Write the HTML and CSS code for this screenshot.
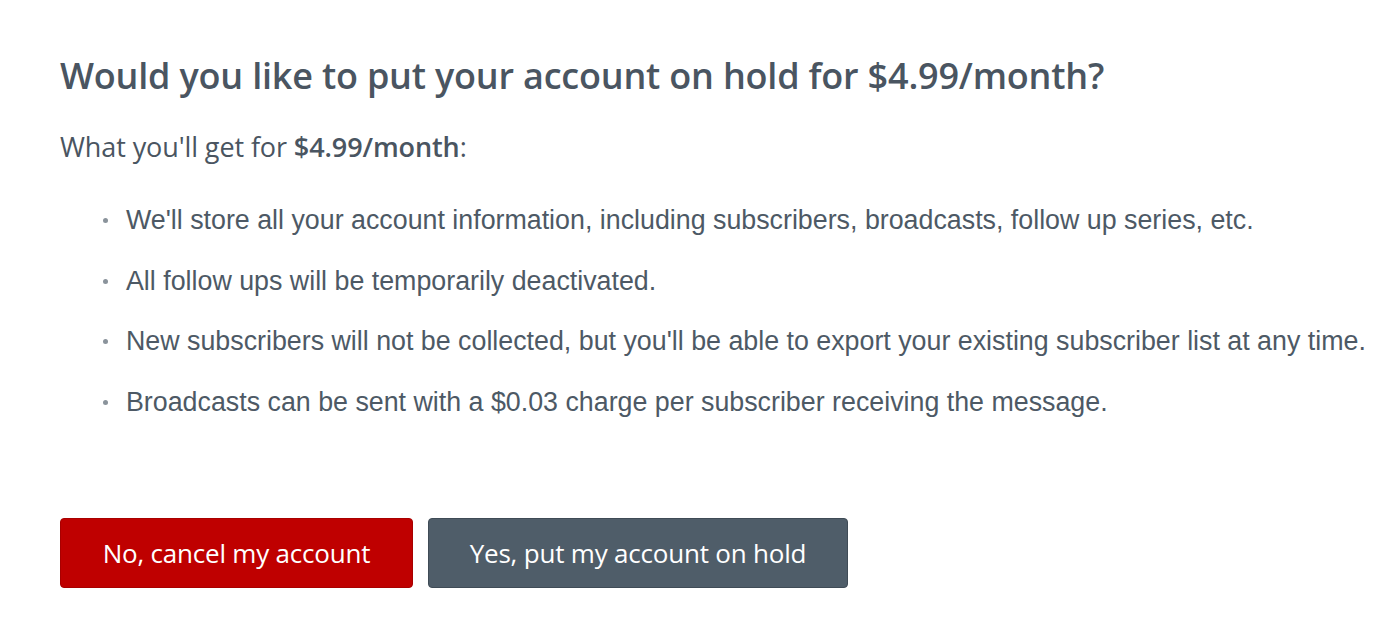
FILE: index.html
```html
<!DOCTYPE html>
<html>
<head>
<meta charset="utf-8">
<link rel="stylesheet" href="styles.css">
</head>
<body>
<main class="page">
  <h1 class="title">Would you like to put your account on hold for $4.99/month?</h1>
  <p class="lead">What you'll get for <strong>$4.99/month</strong>:</p>
  <ul class="perks">
    <li>We'll store all your account information, including subscribers, broadcasts, follow up series, etc.</li>
    <li>All follow ups will be temporarily deactivated.</li>
    <li>New subscribers will not be collected, but you'll be able to export your existing subscriber list at any time.</li>
    <li>Broadcasts can be sent with a $0.03 charge per subscriber receiving the message.</li>
  </ul>
  <div class="actions">
    <button class="btn btn-cancel">No, cancel my account</button>
    <button class="btn btn-hold">Yes, put my account on hold</button>
  </div>
</main>
</body>
</html>
```
FILE: styles.css
```css
html, body {
  margin: 0;
  padding: 0;
  background: #ffffff;
}
.page {
  padding: 52px 0 0 60px;
  color: #4a5763;
  font-family: "Open Sans", "Noto Sans", sans-serif;
}
.title {
  margin: 0;
  font-size: 36px;
  line-height: 48px;
  font-weight: 600;
  color: #4a5561;
  letter-spacing: -0.2px;
}
.lead {
  margin: 29px 0 0;
  font-size: 27px;
  line-height: 36px;
  font-weight: 400;
  color: #4a5561;
  letter-spacing: -0.1px;
}
.lead strong {
  font-weight: 600;
}
.perks {
  margin: 39px 0 0;
  padding: 0 0 0 66px;
  list-style: none;
  font-family: "Liberation Sans", Arial, sans-serif;
  font-size: 26.8px;
  color: #4d5965;
}
.perks li {
  position: relative;
  line-height: 32px;
  margin-bottom: 28.5px;
}
.perks li:last-child {
  margin-bottom: 0;
}
.perks li::before {
  content: "";
  position: absolute;
  left: -23px;
  top: 14px;
  width: 5px;
  height: 5px;
  border-radius: 50%;
  background: #8a939b;
}
.actions {
  display: flex;
  gap: 15px;
  margin-top: 100px;
}
.btn {
  height: 70px;
  border-radius: 4px;
  font-family: "Open Sans", "Noto Sans", sans-serif;
  font-size: 26px;
  color: #ffffff;
  letter-spacing: -0.2px;
  cursor: pointer;
}
.btn-cancel {
  width: 353px;
  background: #bf0000;
  border: 1px solid #a80000;
}
.btn-hold {
  width: 420px;
  background: #4f5d69;
  border: 1px solid #3f4b56;
}
```
